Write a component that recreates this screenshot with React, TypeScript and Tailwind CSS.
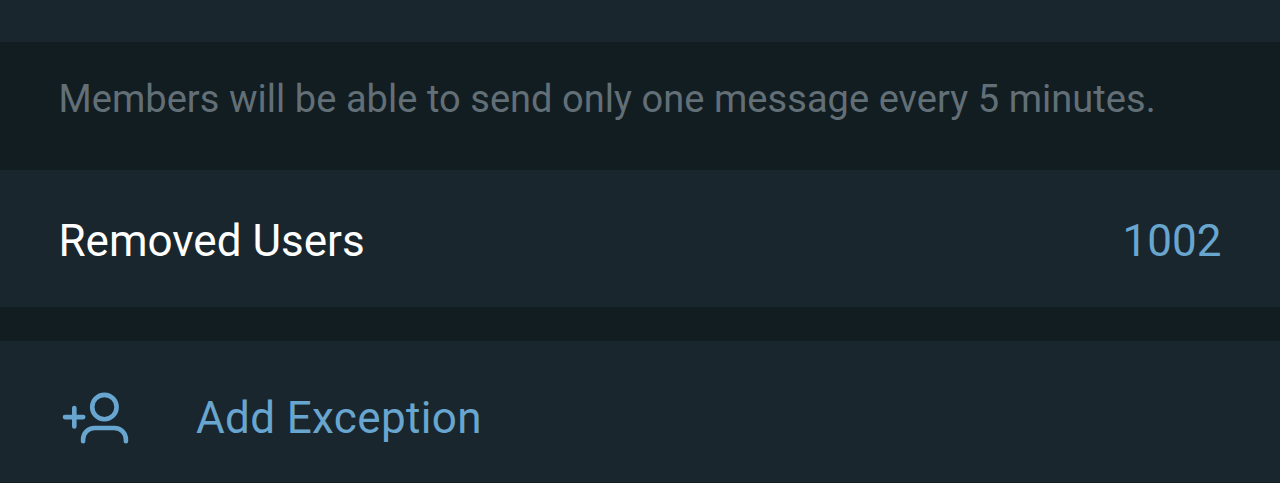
/**
 * Group permission settings
 * Slow mode hint, removed users row and the add exception action
 */

import React from 'react';

export default function App() {
  return (
    <main className="flex h-[483px] w-full flex-col overflow-hidden bg-[#121d22] font-['Roboto',sans-serif]">
      <div className="h-[42px] shrink-0 bg-[#1a262e]" />
      <SectionHint text="Members will be able to send only one message every 5 minutes." />
      <RemovedUsersRow count={1002} />
      <div className="h-[34px] shrink-0" />
      <AddExceptionButton />
    </main>
  );
}

/**
 * Hint text below a settings section
 */
function SectionHint({ text }: { text: string }) {
  return (
    <div className="flex h-32 shrink-0 items-center px-[58.5px] pb-3.5">
      <p className="text-[38px] leading-none tracking-[0.045px] whitespace-nowrap text-[#626f77]">{text}</p>
    </div>
  );
}

/**
 * Removed Users Row
 */
function RemovedUsersRow({ count }: { count: number }) {
  return (
    <div className="flex h-[137px] shrink-0 items-center justify-between bg-[#1a262e] px-[58.5px] pt-1 text-[44px] leading-none">
      <span className="text-white">Removed Users</span>
      <span className="text-[#68a6d0]">{count}</span>
    </div>
  );
}

/**
 * Add Exception Button
 */
function AddExceptionButton() {
  return (
    <button className="flex h-[141px] shrink-0 items-center bg-[#1a262e] pl-[60px] text-left text-[44px] leading-none text-[#68a6d0]">
      <AddUserIcon />
      <span className="pt-3 pl-16 tracking-[0.36px]">Add Exception</span>
    </button>
  );
}

function AddUserIcon() {
  return (
    <svg
      className="h-[65px] w-[72px] shrink-0"
      viewBox="0 0 72 65"
      fill="none"
      stroke="currentColor"
      strokeWidth="4.6"
      strokeLinecap="round"
      aria-hidden="true"
    >
      <circle cx="44.4" cy="28.1" r="12.2" />
      <path d="M5 38.1h18.2M14.3 29v18.4" />
      <path d="M23.1 62.2v-1.7c0-6.500 5-11.500 11.500-11.500h19.800c6.500 0 11.500 5 11.500 11.500v1.700" />
    </svg>
  );
}
